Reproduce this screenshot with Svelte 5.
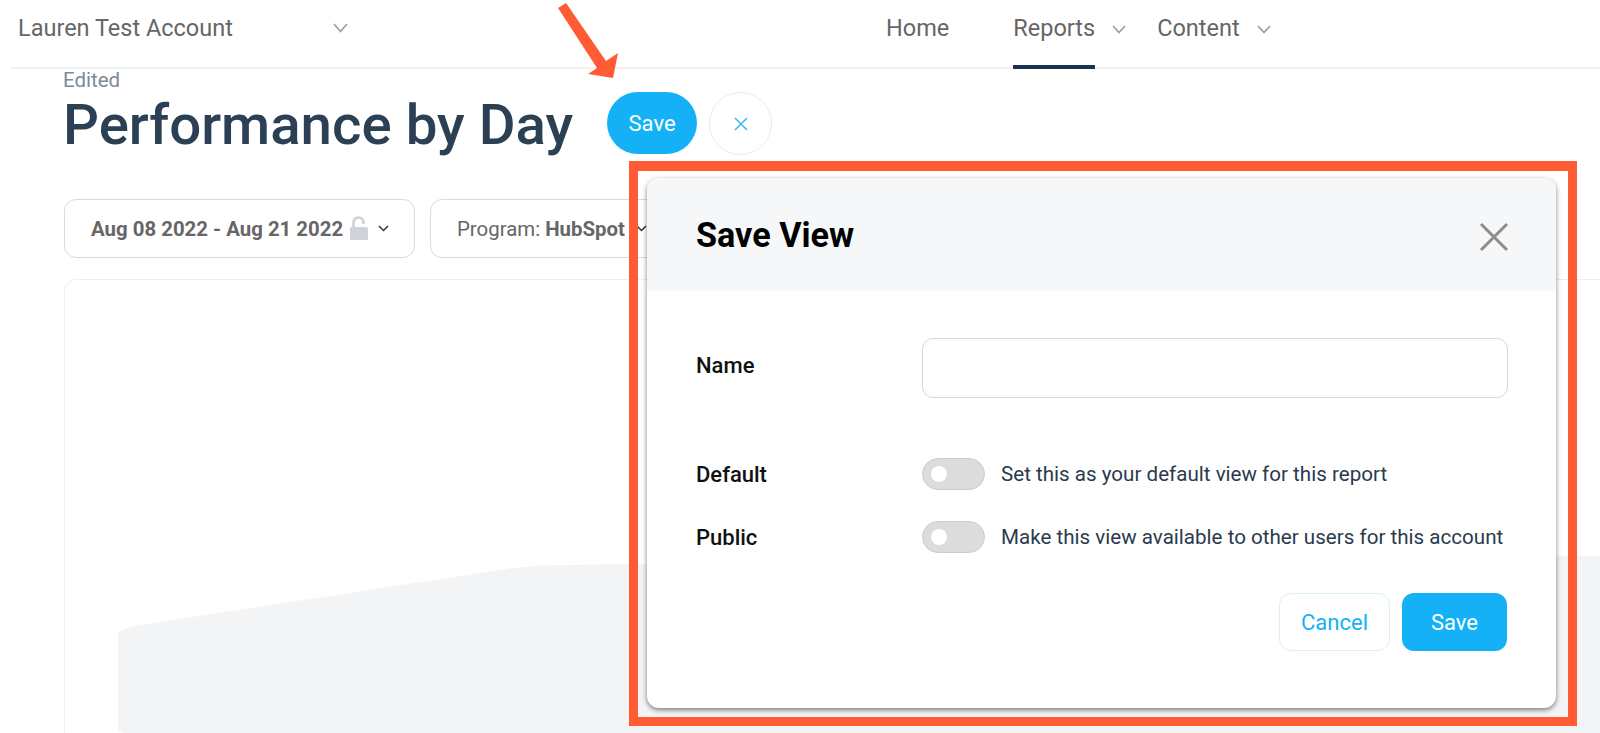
<script>
	let name = $state('');
	let isDefault = $state(false);
	let isPublic = $state(false);
</script>

<div class="page">
	<header class="topbar">
		<div class="account">
			<span>Lauren Test Account</span>
			<svg class="chev" width="15" height="10" viewBox="0 0 15 10"><path d="M1 1l6.5 7.5L14 1" /></svg>
		</div>
		<nav class="nav">
			<a class="home">Home</a>
			<a class="active">Reports</a>
			<svg class="chev reports-chev" width="14" height="9" viewBox="0 0 14 9"><path d="M1 1l6 6.5L13 1" /></svg>
			<a class="content-link">Content</a>
			<svg class="chev" width="14" height="9" viewBox="0 0 14 9"><path d="M1 1l6 6.5L13 1" /></svg>
		</nav>
	</header>

	<main class="main">
		<div class="edited">Edited</div>
		<div class="title-row">
			<h1>Performance by Day</h1>
			<button class="pill">Save</button>
			<button class="circle" aria-label="Discard">
				<svg width="14" height="14" viewBox="0 0 14 14"><path d="M1 1l12 12M13 1L1 13" /></svg>
			</button>
		</div>

		<div class="filters">
			<button class="filter date">
				<b>Aug 08 2022 - Aug 21 2022</b>
				<svg class="lock" width="18" height="24" viewBox="0 0 18 24">
					<path class="shackle" d="M3.5 11V6.5a5 5 0 0 1 10 0V8" />
					<rect x="0" y="11" width="18" height="13" rx="1.5" />
				</svg>
				<svg class="mini" width="11" height="7" viewBox="0 0 11 7"><path d="M1 1l4.5 4.5L10 1" /></svg>
			</button>
			<button class="filter program">
				<span>Program: <b>HubSpot</b></span>
				<svg class="mini" width="11" height="7" viewBox="0 0 11 7"><path d="M1 1l4.5 4.5L10 1" /></svg>
			</button>
		</div>

		<section class="card">
			<svg class="placeholder" width="1536" height="455" viewBox="0 0 1536 455">
				<path d="M53 354 Q53 349 75 345 L448 288 Q475 285 499 285 Q1300 274 1536 276 V455 H85 Q53 455 53 448 Z" />
			</svg>
		</section>
	</main>

	<svg class="arrow" width="70" height="80" viewBox="0 0 70 80">
		<path d="M8 8 L16 3 L56 61 L68 53 L63 78 L38 74 L47 68 Z" />
	</svg>

	<div class="frame"></div>

	<div class="modal">
		<div class="modal-head">
			<h2>Save View</h2>
			<button class="close" aria-label="Close">
				<svg width="30" height="30" viewBox="0 0 30 30"><path d="M2 2l26 26M28 2L2 28" /></svg>
			</button>
		</div>
		<div class="modal-body">
			<div class="field name-field">
				<label for="view-name">Name</label>
				<input id="view-name" type="text" bind:value={name} />
			</div>
			<div class="field toggle-field">
				<span class="label">Default</span>
				<button class="toggle" class:on={isDefault} aria-label="Default" onclick={() => (isDefault = !isDefault)}><i></i></button>
				<span class="hint">Set this as your default view for this report</span>
			</div>
			<div class="field toggle-field second">
				<span class="label">Public</span>
				<button class="toggle" class:on={isPublic} aria-label="Public" onclick={() => (isPublic = !isPublic)}><i></i></button>
				<span class="hint">Make this view available to other users for this account</span>
			</div>
			<div class="actions">
				<button class="cancel">Cancel</button>
				<button class="save">Save</button>
			</div>
		</div>
	</div>
</div>

<style>
	:global(body) {
		margin: 0;
		background: #fff;
		overflow: hidden;
	}

	.page {
		position: relative;
		width: 1600px;
		height: 733px;
		overflow: hidden;
		font-family: Roboto, 'Liberation Sans', sans-serif;
	}

	button {
		font-family: inherit;
		cursor: pointer;
		padding: 0;
	}

	.topbar {
		display: flex;
		height: 67px;
		margin-left: 11px;
		padding-left: 7px;
		border-bottom: 2px solid #f0f1f3;
		font-size: 23.5px;
		color: #666;
	}

	.chev path {
		fill: none;
		stroke: #9a9d9f;
		stroke-width: 1.6;
	}

	.account {
		display: flex;
		align-items: center;
		width: 868px;
		height: 56px;
	}

	.account .chev {
		margin-left: 100px;
	}

	.nav {
		display: flex;
		align-items: center;
		height: 69px;
	}

	.nav a {
		display: flex;
		align-items: center;
		height: 100%;
		padding-bottom: 14px;
		box-sizing: border-box;
	}

	.nav .chev {
		margin-top: -11px;
		margin-left: 17px;
	}

	.home {
		margin-right: 63px;
	}

	.active {
		margin-left: 1px;
		border-bottom: 4px solid #1b3350;
		padding-bottom: 10px !important;
	}

	.content-link {
		margin-left: 31px;
	}

	.main {
		padding-left: 64px;
	}

	.edited {
		margin-top: 1px;
		margin-left: -1px;
		font-size: 20.5px;
		line-height: 21px;
		color: #7d8a98;
	}

	.title-row {
		display: flex;
		align-items: flex-start;
		height: 64px;
	}

	h1 {
		margin: 0 34px 0 -1px;
		font-size: 56.4px;
		line-height: 68px;
		font-weight: 500;
		color: #2b3f55;
		white-space: nowrap;
	}

	.pill {
		width: 90px;
		height: 62px;
		margin-top: 1px;
		border: 0;
		border-radius: 31px;
		background: #14b1f7;
		color: #fff;
		font-size: 22px;
	}

	.circle {
		display: flex;
		align-items: center;
		justify-content: center;
		width: 63px;
		height: 63px;
		margin-top: 1px;
		margin-left: 12px;
		border: 1px solid #d9f1fd;
		border-radius: 50%;
		background: #fff;
	}

	.circle path {
		fill: none;
		stroke: #3bb8f3;
		stroke-width: 1.5;
	}

	.filters {
		display: flex;
		gap: 15px;
		margin-top: 44px;
	}

	.filter {
		display: flex;
		align-items: center;
		height: 59px;
		box-sizing: border-box;
		border: 1px solid #d8dbdf;
		border-radius: 12px;
		background: #fff;
		color: #666;
		font-size: 20.4px;
		white-space: nowrap;
	}

	.filter b {
		font-weight: 700;
	}

	.mini path {
		fill: none;
		stroke: #333;
		stroke-width: 1.5;
	}

	.date {
		width: 351px;
		padding-left: 26px;
	}

	.lock {
		margin: -2px 10px 0 7px;
	}

	.lock rect {
		fill: #ced3d9;
	}

	.lock .shackle {
		fill: none;
		stroke: #ced3d9;
		stroke-width: 2.6;
	}

	.program {
		width: 400px;
		padding-left: 26px;
	}

	.program .mini {
		margin-left: 11px;
	}

	.card {
		width: 1700px;
		height: 500px;
		margin-top: 21px;
		border: 1px solid #eceef0;
		border-radius: 12px;
		box-sizing: border-box;
	}

	.placeholder {
		display: block;
	}

	.placeholder path {
		fill: #f3f4f6;
	}

	.arrow {
		position: absolute;
		left: 550px;
		top: 0;
	}

	.arrow path {
		fill: #ff5c35;
	}

	.frame {
		position: absolute;
		left: 629px;
		top: 161px;
		width: 948px;
		height: 565px;
		box-sizing: border-box;
		border: 9px solid #ff5c35;
		border-top-width: 10px;
	}

	.modal {
		position: absolute;
		left: 647px;
		top: 178px;
		width: 909px;
		height: 530px;
		border-radius: 12px;
		background: #fff;
		box-shadow: 0 2px 5px rgba(0, 0, 0, 0.5);
	}

	.modal-head {
		display: flex;
		align-items: center;
		justify-content: space-between;
		height: 113px;
		padding: 0 47px 0 49px;
		border-radius: 12px 12px 0 0;
		background: #f6f7f9;
	}

	h2 {
		margin: 0;
		font-size: 34.2px;
		font-weight: 700;
		color: #000;
	}

	.close {
		display: flex;
		margin-top: 5px;
		border: 0;
		background: none;
	}

	.close path {
		fill: none;
		stroke: #8c8c8c;
		stroke-width: 3;
	}

	.modal-body {
		padding: 47px 46px 0 49px;
	}

	.field {
		display: flex;
		align-items: center;
	}

	.field label,
	.label {
		width: 226px;
		flex: none;
		font-size: 22px;
		font-weight: 500;
		color: #111;
	}

	.field label {
		margin-top: -6px;
	}

	input {
		width: 586px;
		height: 60px;
		box-sizing: border-box;
		border: 1px solid #d5d9de;
		border-radius: 11px;
		background: #fff;
		outline: 0;
		font-size: 20px;
	}

	.toggle-field {
		margin-top: 60px;
	}

	.toggle-field.second {
		margin-top: 31px;
	}

	.toggle {
		display: flex;
		align-items: center;
		flex: none;
		width: 63px;
		height: 32px;
		box-sizing: border-box;
		padding-left: 8px;
		border: 1px solid #cdcdcd;
		border-radius: 16px;
		background: #dcdcdc;
	}

	.toggle i {
		display: block;
		width: 16px;
		height: 16px;
		border-radius: 50%;
		background: #fff;
	}

	.toggle.on {
		justify-content: flex-end;
		padding-right: 8px;
		background: #14b1f7;
	}

	.hint {
		margin-left: 16px;
		font-size: 20.6px;
		color: #2b3a4d;
		white-space: nowrap;
	}

	.actions {
		display: flex;
		justify-content: flex-end;
		gap: 12px;
		margin-top: 40px;
		margin-right: 3px;
	}

	.actions button {
		height: 58px;
		border-radius: 12px;
		font-size: 22px;
	}

	.cancel {
		width: 111px;
		border: 1px solid #d9f1fd;
		background: #fff;
		color: #14b1f7;
	}

	.save {
		width: 105px;
		border: 0;
		background: #14b1f7;
		color: #fff;
	}
</style>
